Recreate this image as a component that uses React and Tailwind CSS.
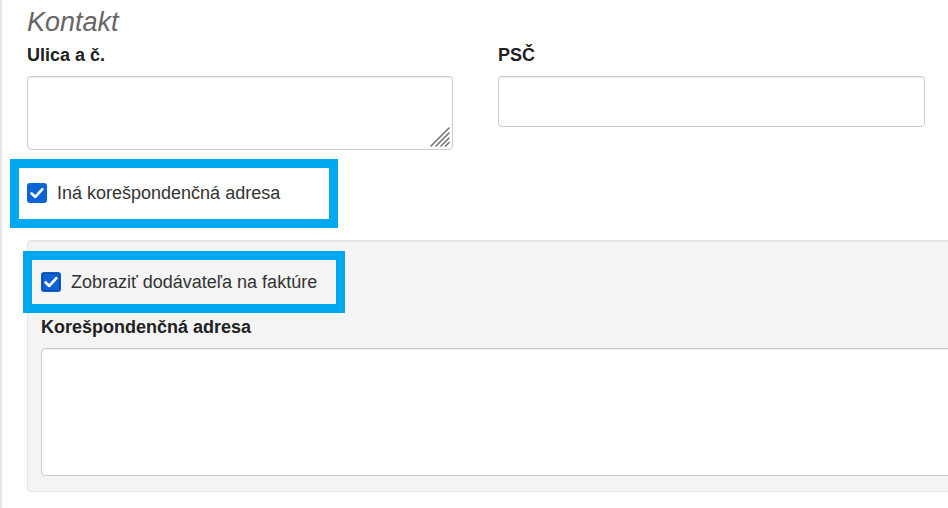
import React from "react";

function Check({ focus }) {
  return (
    <div className="relative w-[20px] h-[20px] shrink-0 rounded-[3px] bg-[#0b63d7] flex items-center justify-center">
      {focus && (
        <div className="absolute inset-[1px] rounded-[2px] border border-dotted border-[#0a2f66]" />
      )}
      <svg width="20" height="20" viewBox="0 0 20 20" className="absolute inset-0">
        <path d="M4.6 10.4 L8.3 13.9 L15.4 6.2" fill="none" stroke="white" strokeWidth="2.7" strokeLinecap="round" strokeLinejoin="round" />
      </svg>
    </div>
  );
}

function Grip() {
  return (
    <svg width="22" height="22" viewBox="0 0 22 22" className="absolute right-[2px] bottom-[2px] pointer-events-none">
      <g stroke="#707070" strokeWidth="1.6" strokeLinecap="round">
        <line x1="2" y1="20" x2="20" y2="2" />
        <line x1="7" y1="20" x2="20" y2="7" />
        <line x1="12" y1="20" x2="20" y2="12" />
        <line x1="16.5" y1="20" x2="20" y2="16.5" />
      </g>
    </svg>
  );
}

export default function App() {
  return (
    <div className="w-[948px] h-[508px] overflow-hidden bg-white border-l-[2px] border-[#e0e6ed] font-['Liberation_Sans',Arial,sans-serif] text-[#333]">
      <div className="pl-[25px]">
        <h2 className="pt-[7px] text-[27px] leading-[30px] italic font-normal text-[#666]">Kontakt</h2>
        <div className="flex gap-[45px] mt-[8px]">
          <div className="w-[426px]">
            <label className="block text-[18px] leading-[20px] font-bold text-[#222]">Ulica a č.</label>
            <div className="relative mt-[11px]">
              <textarea className="block w-full h-[74px] resize-none bg-white border border-[#ccc] rounded-[4px] shadow-[inset_0_1px_1px_rgba(0,0,0,0.075)] outline-none" />
              <Grip />
            </div>
          </div>
          <div className="w-[427px]">
            <label className="block text-[18px] leading-[20px] font-bold text-[#222]">PSČ</label>
            <div className="mt-[11px] h-[51px] bg-white border border-[#ccc] rounded-[4px] shadow-[inset_0_1px_1px_rgba(0,0,0,0.075)]" />
          </div>
        </div>

        <div className="mt-[9px] ml-[-17px] w-[328px] h-[69px] border-[9px] border-[#00a8f2] flex items-center gap-[10px] pl-[8px] pb-[2px]">
          <Check />
          <span className="text-[18px] leading-[20px]">Iná korešpondenčná adresa</span>
        </div>

        <div className="mt-[12px] w-[940px] h-[252px] bg-[#f4f4f4] border border-[#e3e3e3] rounded-[4px] shadow-[inset_0_1px_1px_rgba(0,0,0,0.05)] pt-[10px] pl-[13px]">
          <div className="ml-[-18px] w-[322px] h-[62px] border-[9px] border-[#00a8f2] flex items-center gap-[10px] pl-[9px]">
            <Check focus />
            <span className="text-[18px] leading-[20px]">Zobraziť dodávateľa na faktúre</span>
          </div>
          <label className="block mt-[4px] text-[18px] leading-[20px] font-bold text-[#222]">Korešpondenčná adresa</label>
          <textarea className="mt-[11px] block w-[920px] h-[128px] resize-none bg-white border border-[#ccc] rounded-[4px] shadow-[inset_0_1px_1px_rgba(0,0,0,0.075)] outline-none" />
        </div>
      </div>
    </div>
  );
}
